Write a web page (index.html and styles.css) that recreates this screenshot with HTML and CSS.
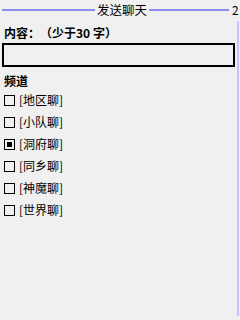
FILE: index.html
```html
<!DOCTYPE html>
<html>
<head>
<meta charset="utf-8">
<link rel="stylesheet" href="styles.css">
</head>
<body>
<div class="screen">
  <div class="header">
    <span class="line line-left"></span>
    <span class="title">发送聊天</span>
    <span class="line line-right"></span>
    <span class="page">2</span>
  </div>
  <div class="content">
    <div class="label">内容：（少于30 字）</div>
    <div class="input"></div>
    <div class="label section">频道</div>
    <ul class="options">
      <li class="option"><span class="box"></span><span class="opt-text">[地区聊]</span></li>
      <li class="option"><span class="box"></span><span class="opt-text">[小队聊]</span></li>
      <li class="option"><span class="box checked"></span><span class="opt-text">[洞府聊]</span></li>
      <li class="option"><span class="box"></span><span class="opt-text">[同乡聊]</span></li>
      <li class="option"><span class="box"></span><span class="opt-text">[神魔聊]</span></li>
      <li class="option"><span class="box"></span><span class="opt-text">[世界聊]</span></li>
    </ul>
  </div>
  <div class="scrollbar"></div>
</div>
</body>
</html>
```
FILE: styles.css
```css
html, body {
  margin: 0;
  padding: 0;
  background: #eff0ef;
}
.screen {
  position: relative;
  width: 240px;
  height: 320px;
  overflow: hidden;
  font-family: "Noto Sans CJK SC", "Noto Sans", sans-serif;
  color: #000;
  font-size: 12px;
  text-spacing-trim: space-all;
}
.header {
  display: flex;
  align-items: center;
  height: 20px;
  padding-left: 2px;
}
.line {
  height: 2px;
  background: #8c8cee;
}
.line-left {
  width: 93px;
}
.line-right {
  width: 80px;
}
.title {
  width: 54px;
  text-align: center;
  font-size: 12.5px;
  line-height: 20px;
}
.page {
  margin-left: 3px;
  font-size: 12px;
  line-height: 20px;
}
.content {
  padding: 6px 5px 0 2px;
}
.label {
  font-weight: bold;
  line-height: 14px;
  padding-left: 2px;
  height: 14px;
}
.input {
  margin-top: 3px;
  width: 229px;
  height: 20px;
  border: 2px solid #000;
}
.section {
  margin-top: 7px;
}
.options {
  list-style: none;
  margin: 1px 0 0;
  padding: 0 0 0 2px;
}
.option {
  display: flex;
  align-items: center;
  height: 22px;
}
.box {
  box-sizing: border-box;
  width: 11px;
  height: 11px;
  border: 1px solid #000;
  display: flex;
  align-items: center;
  justify-content: center;
}
.box.checked::after {
  content: "";
  width: 5px;
  height: 5px;
  background: #000;
}
.opt-text {
  margin-left: 4px;
  font-size: 12px;
  line-height: 14px;
}
.scrollbar {
  position: absolute;
  left: 237px;
  top: 21px;
  width: 2px;
  height: 295px;
  background: #c4c4fa;
}
```
